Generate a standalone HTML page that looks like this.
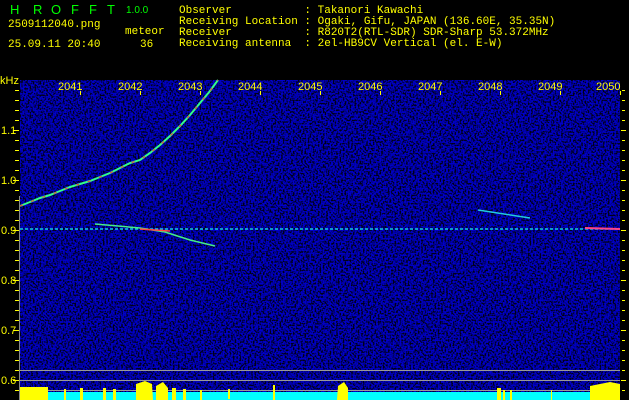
<!DOCTYPE html>
<html><head><meta charset="utf-8"><style>
body{margin:0;width:629px;height:400px;background:#000;overflow:hidden;position:relative;font-family:"Liberation Mono","DejaVu Sans Mono",monospace;}
.t{position:absolute;color:#ff0;font-size:11px;white-space:pre;line-height:11px;}
.g{position:absolute;color:#0f0;font-size:13px;line-height:13px;top:3px;font-family:"Liberation Sans",sans-serif;}
</style></head><body>
<div class="g" style="left:10px">H</div><div class="g" style="left:33px">R</div>
<div class="g" style="left:51px">O</div><div class="g" style="left:71px">F</div>
<div class="g" style="left:89px">F</div><div class="g" style="left:107px">T</div>
<div class="t" style="left:126px;top:5px;color:#0f0;font-size:10px;font-family:'Liberation Sans',sans-serif">1.0.0</div>
<div class="t" style="left:8px;top:20px">2509112040.png</div>
<div class="t" style="left:125px;top:27px">meteor</div>
<div class="t" style="left:8px;top:40px">25.09.11 20:40</div>
<div class="t" style="left:140px;top:40px">36</div>
<div class="t" style="left:179px;top:6px">Observer           : Takanori Kawachi
Receiving Location : Ogaki, Gifu, JAPAN (136.60E, 35.35N)
Receiver           : R820T2(RTL-SDR) SDR-Sharp 53.372MHz
Receiving antenna  : 2el-HB9CV Vertical (el. E-W)</div>
<svg width="629" height="400" style="position:absolute;left:0;top:0">
<defs>
<filter id="n" x="0" y="0" width="100%" height="100%">
<feTurbulence type="fractalNoise" baseFrequency="0.6" numOctaves="1" seed="3"/>
<feColorMatrix type="matrix" values="0 0 0 0 0  0 0 0 0 0  5 0 0 0 -2.0  0 0 0 0 1"/>
</filter>
</defs>
<rect x="20" y="80" width="600" height="320" fill="#000"/>
<rect x="20" y="80" width="600" height="320" filter="url(#n)"/>
<rect x="20" y="80" width="600" height="320" fill="#000050" opacity="0.3"/>
<g fill="#ff0" font-family="Liberation Sans,sans-serif" font-size="11">
<text x="0" y="84">kHz</text>
<text x="1" y="134">1.1</text><text x="1" y="184">1.0</text><text x="1" y="234">0.9</text>
<text x="1" y="284">0.8</text><text x="1" y="334">0.7</text><text x="1" y="384">0.6</text>
<text x="58" y="90">2041</text><text x="118" y="90">2042</text><text x="178" y="90">2043</text>
<text x="238" y="90">2044</text><text x="298" y="90">2045</text><text x="358" y="90">2046</text>
<text x="418" y="90">2047</text><text x="478" y="90">2048</text><text x="538" y="90">2049</text>
<text x="596" y="90">2050</text>
</g>
<g stroke="#ff0" stroke-width="1">
<path d="M15 90.5h4M15 100.5h4M15 110.5h4M15 120.5h4M13 130.5h6M15 140.5h4M15 150.5h4M15 160.5h4M15 170.5h4M13 180.5h6M15 190.5h4M15 200.5h4M15 210.5h4M15 220.5h4M13 230.5h6M15 240.5h4M15 250.5h4M15 260.5h4M15 270.5h4M13 280.5h6M15 290.5h4M15 300.5h4M15 310.5h4M15 320.5h4M13 330.5h6M15 340.5h4M15 350.5h4M15 360.5h4M15 370.5h4M13 380.5h6M15 390.5h4"/>
<path d="M622 90.5h3M622 100.5h3M622 110.5h3M622 120.5h3M621 130.5h5M622 140.5h3M622 150.5h3M622 160.5h3M622 170.5h3M621 180.5h5M622 190.5h3M622 200.5h3M622 210.5h3M622 220.5h3M621 230.5h5M622 240.5h3M622 250.5h3M622 260.5h3M622 270.5h3M621 280.5h5M622 290.5h3M622 300.5h3M622 310.5h3M622 320.5h3M621 330.5h5M622 340.5h3M622 350.5h3M622 360.5h3M622 370.5h3M621 380.5h5M622 390.5h3"/>
<path d="M80.5 91v4M140.5 91v4M200.5 91v4M260.5 91v4M320.5 91v4M380.5 91v4M440.5 91v4M500.5 91v4M560.5 91v4M620.5 91v4"/>
</g>
<line x1="19.5" y1="196" x2="19.5" y2="400" stroke="#888"/>
<polyline fill="none" stroke="#3f8" stroke-width="2" points="20,206 30,202 40,198 50,195 60,191 70,187 80,184 90,181 100,177 110,173 120,168 130,163 140,160 150,153 160,145 170,136 180,126 190,115 200,103 210,91 218,80"/>
<polyline fill="none" stroke="#f33" stroke-width="1" stroke-dasharray="3 9" points="20,206 30,202 40,198 50,195 60,191 70,187 80,184 90,181 100,177 110,173 120,168 130,163 140,160 150,153 160,145 170,136 180,126 190,115 200,103 210,91 218,80"/>
<line x1="20" y1="229" x2="620" y2="229" stroke="#1cd" stroke-width="1.5" stroke-dasharray="3 2"/>
<polyline fill="none" stroke="#4e8" stroke-width="1.5" points="95,224 140,228 165,232 190,240 215,246"/>
<line x1="478" y1="210" x2="530" y2="218" stroke="#2cd" stroke-width="1.5"/>
<line x1="140" y1="229" x2="170" y2="231" stroke="#f44" stroke-width="1.5"/>
<line x1="585" y1="228" x2="620" y2="229" stroke="#f48" stroke-width="2"/>
<line x1="20" y1="370.5" x2="620" y2="370.5" stroke="#999"/>
<line x1="20" y1="380.5" x2="620" y2="380.5" stroke="#999"/>
<line x1="20" y1="390.5" x2="620" y2="390.5" stroke="#999"/>
<rect x="20" y="392" width="600" height="8" fill="#0ff"/>
<g fill="#ff0">
<rect x="20" y="387" width="28" height="13"/>
<rect x="64" y="389" width="2" height="11"/><rect x="80" y="388" width="3" height="12"/>
<polygon points="136,400 136,384 145,381 152,384 153,400"/>
<polygon points="156,400 156,386 163,382 168,388 168,400"/>
<rect x="103" y="388" width="3" height="12"/><rect x="113" y="389" width="3" height="12"/>
<rect x="172" y="388" width="4" height="12"/><rect x="183" y="389" width="3" height="12"/>
<rect x="200" y="390" width="2" height="10"/><rect x="228" y="389" width="2" height="10"/>
<rect x="273" y="385" width="2" height="15"/>
<polygon points="337,400 338,386 344,382 348,388 348,400"/>
<rect x="497" y="388" width="4" height="12"/><rect x="503" y="390" width="2" height="10"/>
<rect x="510" y="390" width="2" height="10"/><rect x="551" y="390" width="1" height="10"/>
<polygon points="590,400 590,386 600,384 610,382 620,384 620,400"/>
</g>
</svg>
</body></html>
